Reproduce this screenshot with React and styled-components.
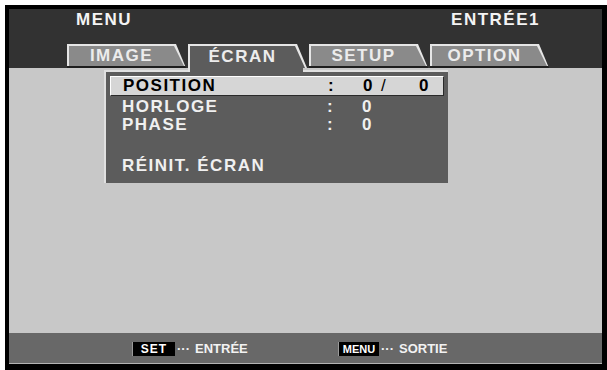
import React from "react";
import styled, { createGlobalStyle } from "styled-components";

const GlobalStyle = createGlobalStyle`
  html, body {
    margin: 0;
    padding: 0;
    background: #fff;
  }
  body {
    font-family: "Liberation Sans", Arial, sans-serif;
  }
`;

const Frame = styled.div`
  box-sizing: border-box;
  margin: 5px 0 0 5px;
  width: 602px;
  height: 365px;
  border-style: solid;
  border-color: #000;
  border-width: 4px 5px 6px 4px;
  display: flex;
  flex-direction: column;
  overflow: hidden;
`;

const Header = styled.div`
  height: 59px;
  background: #323232;
  display: flex;
  flex-direction: column;
  justify-content: space-between;
  padding-top: 1px;
  box-sizing: border-box;
`;

const TitleRow = styled.div`
  display: flex;
  justify-content: space-between;
  padding: 0 62px 0 67px;
`;

const Title = styled.span`
  color: #f4f4f4;
  font-weight: bold;
  font-size: 17px;
  line-height: 20px;
  letter-spacing: 1.5px;
`;

const TabRow = styled.div`
  display: flex;
  gap: 2px;
  padding-left: 58px;
  height: 24px;
`;

const Tab = styled.div`
  position: relative;
  width: 119px;
  height: 24px;
  z-index: 1;

  ${({ $active }) =>
    $active &&
    `
    &::after {
      content: "";
      position: absolute;
      left: 0;
      top: 100%;
      width: 115px;
      height: 4px;
      box-sizing: border-box;
      border-left: 2px solid #e6e6e6;
      background: #5c5c5c;
    }
  `}
`;

const TabEdge = styled.div`
  height: 100%;
  box-sizing: border-box;
  padding: 2px 2px ${({ $active }) => ($active ? "0" : "2px")} 2px;
  background: ${({ $active }) =>
    $active
      ? "#e6e6e6"
      : "linear-gradient(to top, #1e1e1e 2px, #e6e6e6 2px)"};
  clip-path: polygon(0 0, calc(100% - 10px) 0, 100% 100%, 0 100%);
`;

const TabFace = styled.div`
  height: 100%;
  display: flex;
  align-items: center;
  justify-content: center;
  padding-right: 10px;
  background: ${({ $active }) => ($active ? "#5c5c5c" : "#8a8a8a")};
  clip-path: polygon(0 0, calc(100% - 10px) 0, 100% 100%, 0 100%);
  color: #ececec;
  font-weight: bold;
  font-size: 17px;
  letter-spacing: 1.5px;
`;

const Content = styled.div`
  flex: 1;
  background: #c8c8c8;
  padding: 2px 0 0 95px;
`;

const Panel = styled.div`
  width: 344px;
  height: 113px;
  box-sizing: border-box;
  background: #5c5c5c;
  border-top: 2px solid #e0e0e0;
  border-left: 2px solid #e0e0e0;
  padding: 4px 4px 0 4px;
`;

const Row = styled.div`
  display: grid;
  grid-template-columns: 205px 35px 1fr;
  align-items: center;
  height: ${({ $selected }) => ($selected ? "18px" : "18px")};
  padding-left: 12px;
  padding-right: 13px;
  margin-top: ${({ $gap }) => $gap || 0}px;
  color: ${({ $selected }) => ($selected ? "#000" : "#f0f0f0")};
  font-weight: bold;
  font-size: 17px;
  line-height: 18px;
  letter-spacing: 1.5px;
  white-space: nowrap;

  ${({ $selected }) =>
    $selected &&
    `
    background: #d6d6d6;
    border-top: 1px solid #fff;
    border-left: 1px solid #fff;
    border-bottom: 1px solid #2a2a2a;
    border-right: 1px solid #2a2a2a;
    margin-bottom: 2px;
  `}
`;

const Value = styled.div`
  display: flex;
  align-items: center;
`;

const Slash = styled.span`
  font-weight: normal;
  margin-left: 7px;
`;

const Far = styled.span`
  margin-left: auto;
`;

const Footer = styled.div`
  height: 31px;
  box-sizing: border-box;
  background: #686868;
  border-bottom: 1px solid #b4b4b4;
  display: flex;
  align-items: center;
  padding-left: 123px;
  padding-top: 1px;
`;

const Hint = styled.div`
  display: flex;
  align-items: center;
  width: ${({ $width }) => ($width ? `${$width}px` : "auto")};
  color: #f2f2f2;
  font-weight: bold;
  font-size: 13px;
`;

const Key = styled.span`
  display: inline-flex;
  align-items: center;
  justify-content: center;
  width: ${({ $width }) => $width}px;
  height: 14px;
  background: #000;
  color: #fff;
  font-size: ${({ $small }) => ($small ? "11px" : "12px")};
  letter-spacing: ${({ $small }) => ($small ? "0" : "1px")};
  border-left: 1px solid #9a9a9a;
`;

const Dots = styled.span`
  margin: 0 5px 0 2px;
  letter-spacing: 0;
`;

const tabs = ["IMAGE", "ÉCRAN", "SETUP", "OPTION"];

export default function App() {
  return (
    <>
      <GlobalStyle />
      <Frame>
        <Header>
          <TitleRow>
            <Title>MENU</Title>
            <Title>ENTRÉE1</Title>
          </TitleRow>
          <TabRow>
            {tabs.map((t) => (
              <Tab key={t} $active={t === "ÉCRAN"}>
                <TabEdge $active={t === "ÉCRAN"}>
                  <TabFace $active={t === "ÉCRAN"}>{t}</TabFace>
                </TabEdge>
              </Tab>
            ))}
          </TabRow>
        </Header>
        <Content>
          <Panel>
            <Row $selected>
              <span>POSITION</span>
              <span>:</span>
              <Value>
                <span>0</span>
                <Slash>/</Slash>
                <Far>0</Far>
              </Value>
            </Row>
            <Row>
              <span>HORLOGE</span>
              <span>:</span>
              <Value>0</Value>
            </Row>
            <Row>
              <span>PHASE</span>
              <span>:</span>
              <Value>0</Value>
            </Row>
            <Row $gap={23}>
              <span>RÉINIT. ÉCRAN</span>
            </Row>
          </Panel>
        </Content>
        <Footer>
          <Hint $width={206}>
            <Key $width={42}>SET</Key>
            <Dots>···</Dots>
            ENTRÉE
          </Hint>
          <Hint>
            <Key $width={40} $small>
              MENU
            </Key>
            <Dots>···</Dots>
            SORTIE
          </Hint>
        </Footer>
      </Frame>
    </>
  );
}
